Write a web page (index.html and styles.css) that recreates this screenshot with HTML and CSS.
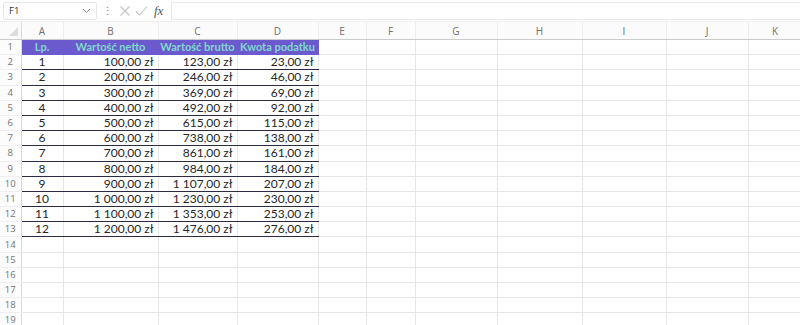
FILE: index.html
```html
<!DOCTYPE html>
<html lang="pl">
<head>
<meta charset="utf-8">
<link rel="stylesheet" href="styles.css">
</head>
<body>
<div class="fbar">
  <div class="namebox"><span class="nb-text">F1</span>
    <svg class="chev" width="9" height="6" viewBox="0 0 9 6"><path d="M1 1 L4.5 4.5 L8 1" fill="none" stroke="#8a8a8a" stroke-width="1"/></svg>
  </div>
  <span class="dots">⋮</span>
  <svg class="ico" width="12" height="12" viewBox="0 0 12 12"><path d="M1.5 1.5 L10.5 10.5 M10.5 1.5 L1.5 10.5" stroke="#c4c4c4" stroke-width="1.1" fill="none"/></svg>
  <svg class="ico" width="13" height="12" viewBox="0 0 13 12"><path d="M1 6.5 L4.5 10 L12 1.5" stroke="#c4c4c4" stroke-width="1.1" fill="none"/></svg>
  <span class="fx">fx</span>
  <div class="finput"></div>
</div>
<table class="sheet">
  <colgroup>
    <col class="c-rh"><col class="c-a"><col class="c-b"><col class="c-c"><col class="c-d"><col class="c-e"><col class="c-f"><col class="c-g"><col class="c-h"><col class="c-i"><col class="c-j"><col class="c-k">
  </colgroup>
  <thead>
    <tr class="colhead">
      <th class="corner"><span class="tri"></span></th><th>A</th><th>B</th><th>C</th><th>D</th><th>E</th><th>F</th><th>G</th><th>H</th><th>I</th><th>J</th><th>K</th>
    </tr>
  </thead>
  <tbody>
    <tr class="hdr"><th>1</th><td class="h ctr">Lp.</td><td class="h">Wartość netto</td><td class="h">Wartość brutto</td><td class="h">Kwota podatku</td><td></td><td></td><td></td><td></td><td></td><td></td><td></td></tr>
    <tr class="d"><th>2</th><td class="v ctr">1</td><td class="v r">100,00 zł</td><td class="v r">123,00 zł</td><td class="v r">23,00 zł</td><td></td><td></td><td></td><td></td><td></td><td></td><td></td></tr>
    <tr class="d"><th>3</th><td class="v ctr">2</td><td class="v r">200,00 zł</td><td class="v r">246,00 zł</td><td class="v r">46,00 zł</td><td></td><td></td><td></td><td></td><td></td><td></td><td></td></tr>
    <tr class="d"><th>4</th><td class="v ctr">3</td><td class="v r">300,00 zł</td><td class="v r">369,00 zł</td><td class="v r">69,00 zł</td><td></td><td></td><td></td><td></td><td></td><td></td><td></td></tr>
    <tr class="d"><th>5</th><td class="v ctr">4</td><td class="v r">400,00 zł</td><td class="v r">492,00 zł</td><td class="v r">92,00 zł</td><td></td><td></td><td></td><td></td><td></td><td></td><td></td></tr>
    <tr class="d"><th>6</th><td class="v ctr">5</td><td class="v r">500,00 zł</td><td class="v r">615,00 zł</td><td class="v r">115,00 zł</td><td></td><td></td><td></td><td></td><td></td><td></td><td></td></tr>
    <tr class="d"><th>7</th><td class="v ctr">6</td><td class="v r">600,00 zł</td><td class="v r">738,00 zł</td><td class="v r">138,00 zł</td><td></td><td></td><td></td><td></td><td></td><td></td><td></td></tr>
    <tr class="d"><th>8</th><td class="v ctr">7</td><td class="v r">700,00 zł</td><td class="v r">861,00 zł</td><td class="v r">161,00 zł</td><td></td><td></td><td></td><td></td><td></td><td></td><td></td></tr>
    <tr class="d"><th>9</th><td class="v ctr">8</td><td class="v r">800,00 zł</td><td class="v r">984,00 zł</td><td class="v r">184,00 zł</td><td></td><td></td><td></td><td></td><td></td><td></td><td></td></tr>
    <tr class="d"><th>10</th><td class="v ctr">9</td><td class="v r">900,00 zł</td><td class="v r">1 107,00 zł</td><td class="v r">207,00 zł</td><td></td><td></td><td></td><td></td><td></td><td></td><td></td></tr>
    <tr class="d"><th>11</th><td class="v ctr">10</td><td class="v r">1 000,00 zł</td><td class="v r">1 230,00 zł</td><td class="v r">230,00 zł</td><td></td><td></td><td></td><td></td><td></td><td></td><td></td></tr>
    <tr class="d"><th>12</th><td class="v ctr">11</td><td class="v r">1 100,00 zł</td><td class="v r">1 353,00 zł</td><td class="v r">253,00 zł</td><td></td><td></td><td></td><td></td><td></td><td></td><td></td></tr>
    <tr class="d"><th>13</th><td class="v ctr">12</td><td class="v r">1 200,00 zł</td><td class="v r">1 476,00 zł</td><td class="v r">276,00 zł</td><td></td><td></td><td></td><td></td><td></td><td></td><td></td></tr>
    <tr><th>14</th><td></td><td></td><td></td><td></td><td></td><td></td><td></td><td></td><td></td><td></td><td></td></tr>
    <tr><th>15</th><td></td><td></td><td></td><td></td><td></td><td></td><td></td><td></td><td></td><td></td><td></td></tr>
    <tr><th>16</th><td></td><td></td><td></td><td></td><td></td><td></td><td></td><td></td><td></td><td></td><td></td></tr>
    <tr><th>17</th><td></td><td></td><td></td><td></td><td></td><td></td><td></td><td></td><td></td><td></td><td></td></tr>
    <tr><th>18</th><td></td><td></td><td></td><td></td><td></td><td></td><td></td><td></td><td></td><td></td><td></td></tr>
    <tr><th>19</th><td></td><td></td><td></td><td></td><td></td><td></td><td></td><td></td><td></td><td></td><td></td></tr>
  </tbody>
</table>
</body>
</html>
```

FILE: styles.css
```css
html, body {
  margin: 0;
  padding: 0;
  background: #ffffff;
  overflow: hidden;
}
body {
  width: 800px;
  height: 325px;
  font-family: "Lato", "Open Sans", sans-serif;
}

/* formula bar */
.fbar {
  height: 22px;
  display: flex;
  align-items: center;
  gap: 0;
  box-sizing: border-box;
  padding: 0 0 0 3px;
  border-bottom: 1px solid #efefef;
}
.namebox {
  width: 94px;
  height: 18px;
  box-sizing: border-box;
  border: 1px solid #e6e6e6;
  border-radius: 2px;
  display: flex;
  align-items: center;
  justify-content: space-between;
  padding: 0 5px 0 5px;
  font-family: "Open Sans", sans-serif;
  font-size: 9.5px;
  color: #333;
}
.dots {
  width: 16px;
  text-align: center;
  color: #8a8a8a;
  font-size: 11px;
  margin-left: 2px;
}
.ico {
  margin-left: 4px;
}
.fx {
  font-family: "Liberation Serif", serif;
  font-style: italic;
  font-size: 13px;
  color: #555;
  margin-left: 6px;
  width: 14px;
}
.finput {
  flex: 1;
  height: 18px;
  margin-left: 3px;
  box-sizing: border-box;
  border: 1px solid #e8e8e8;
  border-right: none;
}

/* sheet */
.sheet {
  border-collapse: collapse;
  table-layout: fixed;
  width: 802px;
  margin-top: 0;
}
.c-rh { width: 21px; }
.c-a { width: 42px; }
.c-b { width: 95px; }
.c-c { width: 79px; }
.c-d { width: 81px; }
.c-e { width: 48px; }
.c-f { width: 49px; }
.c-g { width: 82px; }
.c-h { width: 85px; }
.c-i { width: 84px; }
.c-j { width: 82px; }
.c-k { width: 54px; }

.colhead th {
  height: 17px;
  padding: 0;
  font-weight: normal;
  font-family: "Open Sans", sans-serif;
  font-size: 10px;
  color: #707070;
  text-align: center;
  background: #fbfbfb;
  border-bottom: 1px solid #cccccc;
  border-right: 1px solid #ededed;
}
.colhead th.corner {
  position: relative;
  border-right: 1px solid #dadada;
}
.tri {
  position: absolute;
  right: 3px;
  bottom: 3px;
  width: 0;
  height: 0;
  border-left: 9px solid transparent;
  border-bottom: 9px solid #dcdcdc;
}

tbody tr {
  height: 15.2px;
}
tbody th {
  padding: 0;
  font-weight: normal;
  font-family: "Open Sans", sans-serif;
  font-size: 9.5px;
  color: #737373;
  text-align: center;
  background: #fcfcfc;
  border-right: 1px solid #dadada;
  border-bottom: 1px solid #efefef;
  line-height: 14px;
}
tbody td {
  padding: 0 4px;
  border-right: 1px solid #e6e6e6;
  border-bottom: 1px solid #e6e6e6;
  font-size: 12px;
  line-height: 14px;
  color: #262626;
  white-space: nowrap;
  overflow: hidden;
}
td.h {
  background: #6a5acd;
  color: #80d8cc;
  font-weight: bold;
  text-align: center;
  border-color: #6a5acd;
  padding: 0 1px;
  font-size: 11px;
}
td.ctr { text-align: center; }
td.r { text-align: right; }
tr.d td.v {
  border-bottom: 1px solid #2b2b45;
}
```
